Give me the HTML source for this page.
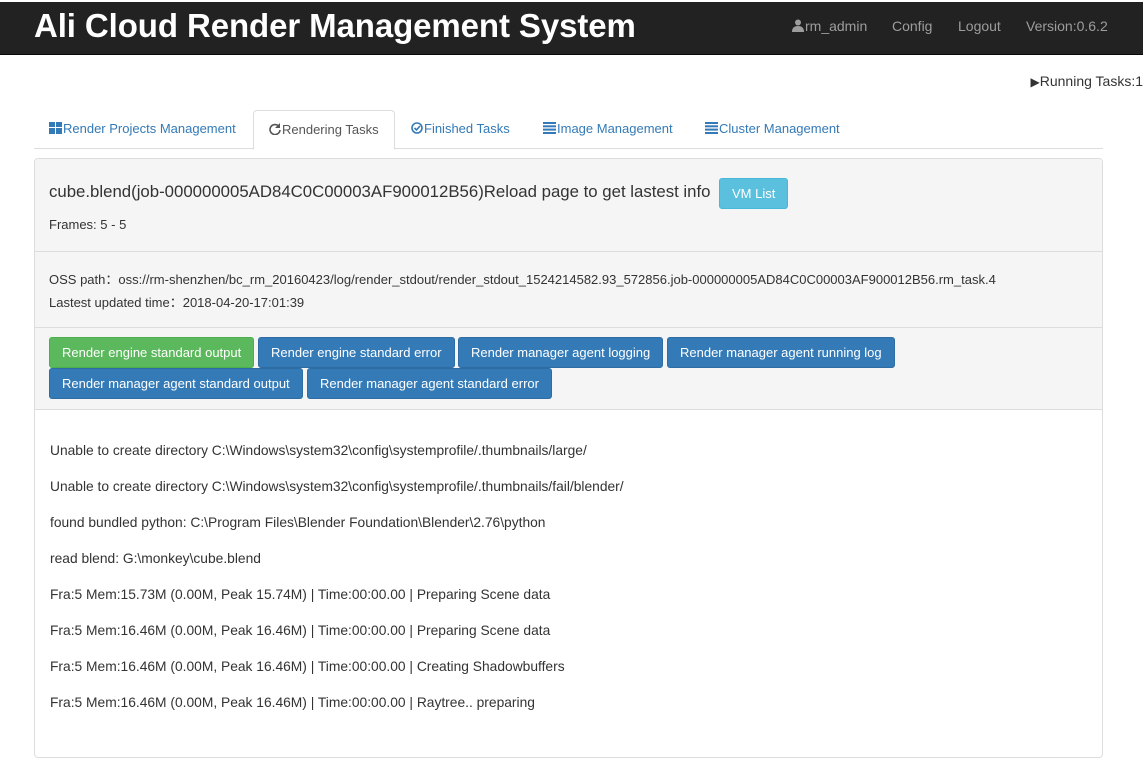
<!DOCTYPE html>
<html><head><meta charset="utf-8"><style>
*{box-sizing:border-box}
body{margin:0;font-family:"Liberation Sans",Arial,sans-serif;font-size:13px;color:#333;background:#fff;width:1143px;height:732px;overflow:hidden;position:relative}
.nav{position:absolute;top:2px;left:0;width:1143px;height:53px;background:#222;border-bottom:1px solid #080808}
.brand{position:absolute;left:34px;top:5px;color:#fff;font-size:33px;font-weight:bold;letter-spacing:-0.1px}
.nr{position:absolute;top:16px;color:#9d9d9d;font-size:14px}
.run{position:absolute;right:0;top:73px;font-size:14px;color:#333}
.tabs{position:absolute;left:34px;top:110px;width:1069px;height:39px;border-bottom:1px solid #ddd}
.tab{position:absolute;top:0;height:39px;line-height:37px;color:#337ab7;font-size:13px;padding:0 15px}
.tab.act{background:#fff;border:1px solid #ddd;border-bottom-color:#fff;border-radius:4px 4px 0 0;color:#555;height:40px}
.panel{position:absolute;left:34px;top:158px;width:1069px;height:600px;border:1px solid #ddd;border-radius:4px;background:#fff}
.sec{position:absolute;left:0;width:1067px;background:#f5f5f5;border-bottom:1px solid #ddd}
.btn{position:absolute;height:31px;line-height:29px;color:#fff;font-size:13px;padding:0 12px;border-radius:3px;background:#337ab7;border:1px solid #2e6da4}
.log{position:absolute;left:15px;font-size:13.8px;color:#333;white-space:nowrap}
.ic{display:inline-block;vertical-align:-1px;margin-right:1px}
.cj{font-family:"Noto Sans CJK SC",sans-serif}
</style></head><body>
<div class="nav">
<div class="brand">Ali Cloud Render Management System</div>
<div class="nr" style="left:792px"><svg class="ic" width="12" height="13" viewBox="0 0 12 13"><circle cx="6" cy="3.5" r="3" fill="#9d9d9d"/><path d="M0 13 Q0 7 6 7 Q12 7 12 13Z" fill="#9d9d9d"/></svg>rm_admin</div>
<div class="nr" style="left:892px">Config</div>
<div class="nr" style="left:958px">Logout</div>
<div class="nr" style="left:1026px">Version:0.6.2</div>
</div>
<div class="run"><span style="font-size:12px">▶</span>Running Tasks:1</div>
<div class="tabs">
<div class="tab" style="left:0"><svg class="ic" width="13" height="12"><rect x="0" y="0" width="6" height="5" fill="#337ab7"/><rect x="7" y="0" width="6" height="5" fill="#337ab7"/><rect x="0" y="6" width="6" height="6" fill="#337ab7"/><rect x="7" y="6" width="6" height="6" fill="#337ab7"/></svg>Render Projects Management</div>
<div class="tab act" style="left:219px"><svg class="ic" width="12" height="12" viewBox="0 0 12 12"><path d="M10 3.5A5 5 0 1 0 11 7" fill="none" stroke="#555" stroke-width="1.6"/><path d="M11 0V5H6Z" fill="#555"/></svg>Rendering Tasks</div>
<div class="tab" style="left:362px"><svg class="ic" width="12" height="12" viewBox="0 0 12 12"><circle cx="6" cy="6" r="5" fill="none" stroke="#337ab7" stroke-width="1.6"/><path d="M3.5 6L5.5 8L9 4" fill="none" stroke="#337ab7" stroke-width="1.6"/></svg>Finished Tasks</div>
<div class="tab" style="left:494px"><svg class="ic" width="13" height="12"><rect y="0" width="13" height="2" fill="#337ab7"/><rect y="3.3" width="13" height="2" fill="#337ab7"/><rect y="6.6" width="13" height="2" fill="#337ab7"/><rect y="10" width="13" height="2" fill="#337ab7"/></svg>Image Management</div>
<div class="tab" style="left:656px"><svg class="ic" width="13" height="12"><rect y="0" width="13" height="2" fill="#337ab7"/><rect y="3.3" width="13" height="2" fill="#337ab7"/><rect y="6.6" width="13" height="2" fill="#337ab7"/><rect y="10" width="13" height="2" fill="#337ab7"/></svg>Cluster Management</div>
</div>
<div class="panel">
<div class="sec" style="top:0;height:93px;border-radius:4px 4px 0 0">
<div style="position:absolute;left:14px;top:23px;font-size:16.8px;white-space:nowrap">cube.blend(job-000000005AD84C0C00003AF900012B56)Reload page to get lastest info</div>
<div class="btn" style="left:684px;top:19px;background:#5bc0de;border-color:#46b8da">VM List</div>
<div style="position:absolute;left:14px;top:58px;font-size:13px">Frames: 5 - 5</div>
</div>
<div class="sec" style="top:93px;height:76px">
<div style="position:absolute;left:14px;top:17px;font-size:13px;white-space:nowrap">OSS path<span class="cj">：</span>oss://rm-shenzhen/bc_rm_20160423/log/render_stdout/render_stdout_1524214582.93_572856.job-000000005AD84C0C00003AF900012B56.rm_task.4</div>
<div style="position:absolute;left:14px;top:40px;font-size:13px">Lastest updated time<span class="cj">：</span>2018-04-20-17:01:39</div>
</div>
<div class="sec" style="top:169px;height:82px">
<div class="btn" style="left:14px;top:9px;background:#5cb85c;border-color:#4cae4c">Render engine standard output</div>
<div class="btn" style="left:223px;top:9px">Render engine standard error</div>
<div class="btn" style="left:423px;top:9px">Render manager agent logging</div>
<div class="btn" style="left:632px;top:9px">Render manager agent running log</div>
<div class="btn" style="left:14px;top:40px">Render manager agent standard output</div>
<div class="btn" style="left:272px;top:40px">Render manager agent standard error</div>
</div>
<div class="log" style="top:284px">Unable to create directory C:\Windows\system32\config\systemprofile/.thumbnails/large/</div>
<div class="log" style="top:320px">Unable to create directory C:\Windows\system32\config\systemprofile/.thumbnails/fail/blender/</div>
<div class="log" style="top:356px">found bundled python: C:\Program Files\Blender Foundation\Blender\2.76\python</div>
<div class="log" style="top:392px">read blend: G:\monkey\cube.blend</div>
<div class="log" style="top:428px">Fra:5 Mem:15.73M (0.00M, Peak 15.74M) | Time:00:00.00 | Preparing Scene data</div>
<div class="log" style="top:464px">Fra:5 Mem:16.46M (0.00M, Peak 16.46M) | Time:00:00.00 | Preparing Scene data</div>
<div class="log" style="top:500px">Fra:5 Mem:16.46M (0.00M, Peak 16.46M) | Time:00:00.00 | Creating Shadowbuffers</div>
<div class="log" style="top:536px">Fra:5 Mem:16.46M (0.00M, Peak 16.46M) | Time:00:00.00 | Raytree.. preparing</div>
</div>
</body></html>
